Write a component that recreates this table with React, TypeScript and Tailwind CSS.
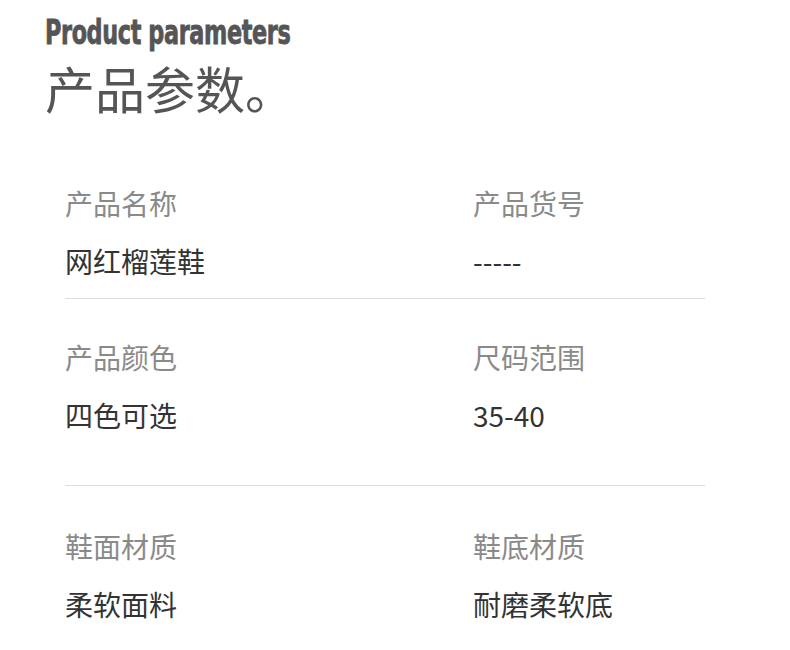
const rows = [
  [
    { label: "产品名称", value: "网红榴莲鞋" },
    { label: "产品货号", value: "-----" },
  ],
  [
    { label: "产品颜色", value: "四色可选" },
    { label: "尺码范围", value: "35-40" },
  ],
  [
    { label: "鞋面材质", value: "柔软面料" },
    { label: "鞋底材质", value: "耐磨柔软底" },
  ],
];

function Cell({ label, value }: { label: string; value: string }) {
  return (
    <div className="flex flex-col">
      <div className="text-[28px] leading-[30px] text-[#8a8a8a]">{label}</div>
      <div className="mt-[28px] text-[28px] leading-[30px] text-[#333]">{value}</div>
    </div>
  );
}

export default function App() {
  return (
    <div
      className="w-[790px] h-[650px] bg-white overflow-hidden"
      style={{ fontFamily: '"Noto Sans CJK SC", "Noto Sans", sans-serif' }}
    >
      <div className="pl-[45px] pt-[14px]">
        <div
          className="origin-left scale-x-[0.73] whitespace-nowrap text-[34px] leading-[36px] font-bold text-[#555] tracking-[-0.5px] [-webkit-text-stroke:0.8px_#555]"
          style={{ fontFamily: '"DejaVu Sans Condensed", "DejaVu Sans", sans-serif' }}
        >
          Product parameters
        </div>
        <div className="mt-[9px] text-[50px] leading-[56px] text-[#555]">产品参数。</div>
      </div>

      <div className="ml-[65px] w-[640px] mt-[73px]">
        <div className="grid grid-cols-[408px_1fr] pb-[22px] border-b border-[#dcdcdc]">
          <Cell {...rows[0][0]} />
          <Cell {...rows[0][1]} />
        </div>
        <div className="grid grid-cols-[408px_1fr] pt-[43px] pb-[55px] border-b border-[#dcdcdc]">
          <Cell {...rows[1][0]} />
          <Cell {...rows[1][1]} />
        </div>
        <div className="grid grid-cols-[408px_1fr] pt-[45px]">
          <Cell {...rows[2][0]} />
          <Cell {...rows[2][1]} />
        </div>
      </div>
    </div>
  );
}
